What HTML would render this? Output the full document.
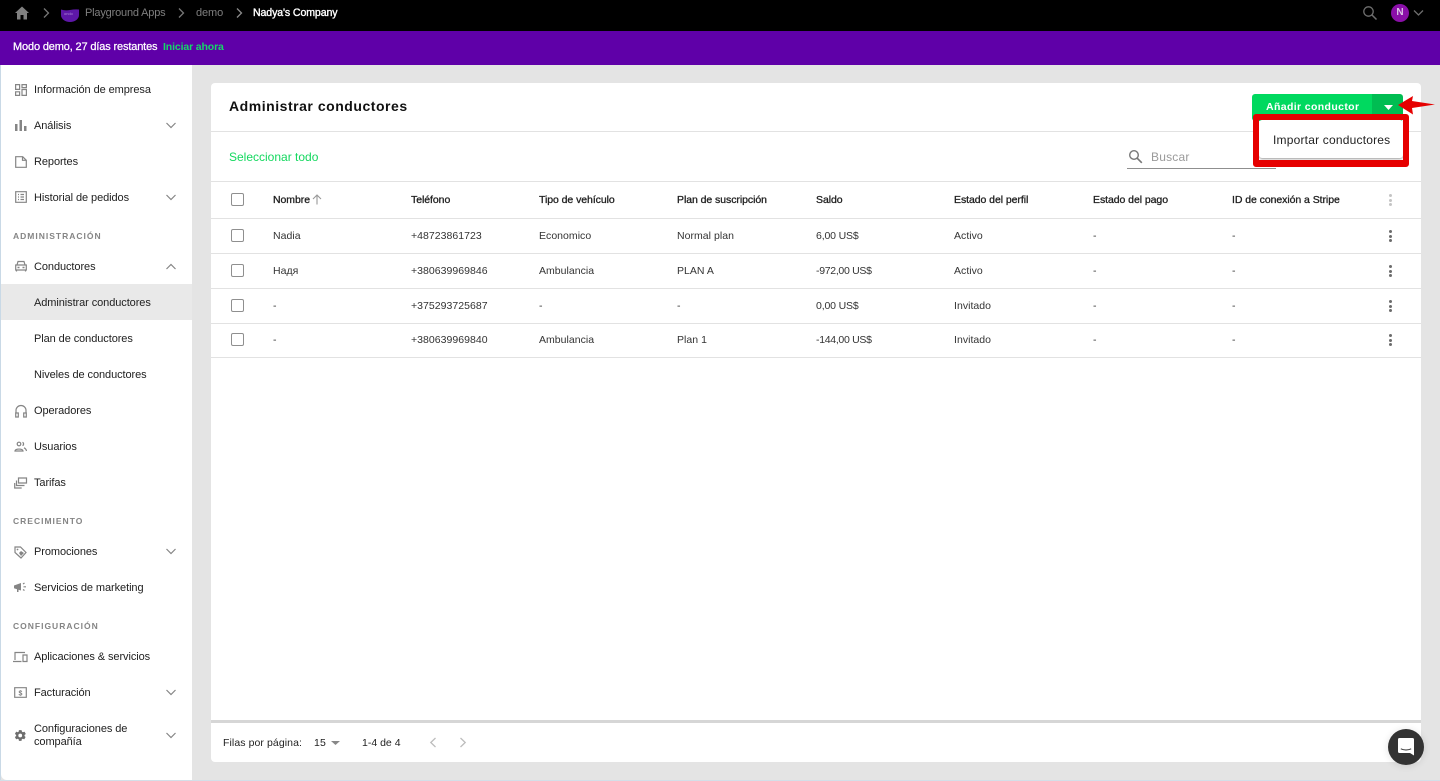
<!DOCTYPE html>
<html lang="es"><head><meta charset="utf-8"><title>Administrar conductores</title>
<style>
html,body{margin:0;padding:0;width:1440px;height:781px;overflow:hidden;background:#e4e4e4;font-family:"Liberation Sans","DejaVu Sans",sans-serif;color:#1c1c1c}
.a{position:absolute}
.t{position:absolute;font-size:11px;line-height:14px;white-space:nowrap}
svg{position:absolute;overflow:visible}
.ic{fill:none;stroke:#858585;stroke-width:1.2}
.f{fill:#858585;stroke:none}
.n{left:34px;color:#1e1e1e;letter-spacing:-.08px}
.h{font-size:10.5px;letter-spacing:-.06px;color:#1e1e1e;-webkit-text-stroke:.3px #1e1e1e}
.c{color:#333;font-size:10.5px;letter-spacing:.03px}
.sec{position:absolute;left:13px;font-size:8.5px;font-weight:700;letter-spacing:1px;color:#858585;line-height:12px}
.l{position:absolute;height:1px;background:#e2e2e2;left:211px;width:1210px}
.cb{position:absolute;left:231px;width:11px;height:11px;border:1.5px solid #8f8f8f;border-radius:2px}
.d i{position:absolute;left:0;width:3px;height:3px;border-radius:50%;background:#6c6c6c}
.d{position:absolute;left:1388.500px;width:3px;height:13px}
</style></head><body>
<div class="a" style="left:0;top:0;width:1440px;height:31px;background:#000"></div>
<div class="a" style="left:0;top:31px;width:1440px;height:34px;background:#5f00a8"></div>
<div class="a" style="left:0;top:65px;width:1px;height:716px;background:#c9d9e6"></div>
<div class="a" style="left:1px;top:65px;width:191px;height:715px;background:#fff;border-bottom-left-radius:6px"></div>
<div class="a" style="left:0;top:780px;width:1440px;height:1px;background:#d3dfe8"></div>

<svg style="left:14px;top:5px" width="16" height="16" viewBox="0 0 16 16"><path d="M1 8 8 1.500 15 8h-2v6.500H9.500V10h-3v4.500H3V8z" fill="#808080"/></svg>
<svg style="left:42px;top:7px" width="8" height="12" viewBox="0 0 8 12"><path d="M2 1.500 6.500 6 2 10.500" fill="none" stroke="#777" stroke-width="1.300"/></svg>
<svg style="left:61px;top:8px" width="18" height="14" viewBox="0 0 18 14"><path d="M0 1.500Q4 3 9 2T18 1.500V7A9 7 0 0 1 0 7z" fill="#5e17a8"/></svg>
<div class="t" style="left:64px;top:7px;font-size:4px;color:#a987d4">ondo</div>
<div class="t" style="left:85px;top:6px;color:#7f7f7f;letter-spacing:-.18px">Playground Apps</div>
<svg style="left:177px;top:7px" width="8" height="12" viewBox="0 0 8 12"><path d="M2 1.500 6.500 6 2 10.500" fill="none" stroke="#777" stroke-width="1.300"/></svg>
<div class="t" style="left:196px;top:6px;color:#7f7f7f;letter-spacing:-.1px">demo</div>
<svg style="left:235px;top:7px" width="8" height="12" viewBox="0 0 8 12"><path d="M2 1.500 6.500 6 2 10.500" fill="none" stroke="#8b8b8b" stroke-width="1.300"/></svg>
<div class="t" style="left:253px;top:6px;color:#fff;font-size:10.600px;letter-spacing:-.12px;-webkit-text-stroke:.35px #fff">Nadya's Company</div>
<svg style="left:1362px;top:5px" width="16" height="16" viewBox="0 0 16 16"><circle cx="6.500" cy="6.500" r="4.700" fill="none" stroke="#6e6e6e" stroke-width="1.300"/><path d="M10 10l4.500 4.500" stroke="#6e6e6e" stroke-width="1.500"/></svg>
<div class="a" style="left:1391px;top:4px;width:18px;height:18px;border-radius:50%;background:#8a0fa8;color:#dcc4e6;font-size:10px;font-weight:700;line-height:18px;text-align:center">N</div>
<svg style="left:1413px;top:9px" width="11" height="8" viewBox="0 0 11 8"><path d="M1 1.500 5.500 6 10 1.500" fill="none" stroke="#6e6e6e" stroke-width="1.300"/></svg>

<div class="t" style="left:13px;top:40px;color:#fff;font-size:11px;letter-spacing:-.15px;-webkit-text-stroke:.25px #fff">Modo demo, 27 días restantes</div>
<div class="t" style="left:163px;top:40px;color:#14d868;font-weight:700;font-size:10.500px;letter-spacing:-.13px">Iniciar ahora</div>

<!-- Sidebar -->
<div class="a" style="left:1px;top:284px;width:191px;height:36px;background:#e9e9e9"></div>
<div class="t n" style="top:83px">Información de empresa</div>
<div class="t n" style="top:119px">Análisis</div>
<div class="t n" style="top:155px">Reportes</div>
<div class="t n" style="top:191px">Historial de pedidos</div>
<div class="sec" style="top:230px">ADMINISTRACIÓN</div>
<div class="t n" style="top:260px">Conductores</div>
<div class="t n" style="top:296px">Administrar conductores</div>
<div class="t n" style="top:332px">Plan de conductores</div>
<div class="t n" style="top:368px">Niveles de conductores</div>
<div class="t n" style="top:404px">Operadores</div>
<div class="t n" style="top:440px">Usuarios</div>
<div class="t n" style="top:476px">Tarifas</div>
<div class="sec" style="top:515px">CRECIMIENTO</div>
<div class="t n" style="top:545px">Promociones</div>
<div class="t n" style="top:581px">Servicios de marketing</div>
<div class="sec" style="top:620px">CONFIGURACIÓN</div>
<div class="t n" style="top:650px">Aplicaciones &amp; servicios</div>
<div class="t n" style="top:686px">Facturación</div>
<div class="t n" style="top:723px;line-height:13px">Configuraciones de<br>compañía</div>

<!-- Sidebar chevrons -->
<svg style="left:166px;top:122px" width="10" height="7" viewBox="0 0 10 7"><path d="M.5 1 5 5.500 9.500 1" class="ic"/></svg>
<svg style="left:166px;top:194px" width="10" height="7" viewBox="0 0 10 7"><path d="M.5 1 5 5.500 9.500 1" class="ic"/></svg>
<svg style="left:166px;top:263px" width="10" height="7" viewBox="0 0 10 7"><path d="M.5 6 5 1.500 9.500 6" class="ic"/></svg>
<svg style="left:166px;top:548px" width="10" height="7" viewBox="0 0 10 7"><path d="M.5 1 5 5.500 9.500 1" class="ic"/></svg>
<svg style="left:166px;top:689px" width="10" height="7" viewBox="0 0 10 7"><path d="M.5 1 5 5.500 9.500 1" class="ic"/></svg>
<svg style="left:166px;top:732px" width="10" height="7" viewBox="0 0 10 7"><path d="M.5 1 5 5.500 9.500 1" class="ic"/></svg>

<!-- Sidebar icons -->
<svg style="left:15px;top:84px" width="12" height="12" viewBox="0 0 12 12"><path class="ic" d="M.6.600h4v4.800h-4zM7 .600h4.400v3H7zM7 5.500h4.400v5.900H7zM.6 7.800h4v3.600h-4z"/></svg>
<svg style="left:15px;top:120px" width="12" height="12" viewBox="0 0 12 12"><path class="f" d="M0 4h2.500v7H0zM4.500 0H7v11H4.500zM9 6h2.500v5H9z"/></svg>
<svg style="left:15px;top:156px" width="12" height="12" viewBox="0 0 12 12"><path class="ic" d="M.7.700h7l3.600 3.600v7H.7zM7.500.700v3.600h3.800"/></svg>
<svg style="left:15px;top:191px" width="12" height="12" viewBox="0 0 12 12"><path class="ic" d="M.7.700h10.600v10.600H.7zM3 3.500h1M5.500 3.500H9M3 6h1M5.500 6H9M3 8.500h1M5.500 8.500H9"/></svg>
<svg style="left:15px;top:260px" width="12" height="13" viewBox="0 0 12 13"><path class="ic" d="M3 1.500h6l1 3.500H2zM.7 5h10.600v5H.7zM1.500 10v1.500M10.500 10v1.500"/><path class="f" d="M2.500 6.800h2v1.500h-2zM7.500 6.800h2v1.500h-2z"/></svg>
<svg style="left:15px;top:405px" width="12" height="13" viewBox="0 0 12 13"><path class="ic" d="M1 8.500V5.500a5 5 0 0 1 10 0v3"/><path class="ic" d="M.7 8h2.600v4H.7zM8.700 8h2.600v4H8.700z"/></svg>
<svg style="left:14px;top:441px" width="13" height="11" viewBox="0 0 13 11"><circle cx="5" cy="3" r="1.800" class="ic"/><path class="ic" d="M1 10c.3-2.600 7.700-2.600 8 0zM8.500 1.300a1.800 1.800 0 0 1 0 3.300M10 6.800c1 .5 2.200 1.400 2.500 3.200"/></svg>
<svg style="left:14px;top:477px" width="13" height="12" viewBox="0 0 13 12"><path class="ic" d="M4.500 1h8v5h-8zM2.500 3.500v5h8M.7 6v5h7"/></svg>
<svg style="left:14px;top:546px" width="13" height="13" viewBox="0 0 13 13"><path class="ic" d="M1 1h5.500l5.500 5.500-5 5.500L1 6.500z"/><circle class="f" cx="3.500" cy="3.500" r=".9"/><path class="f" d="M7 5l3 2-3 3-2-3z"/></svg>
<svg style="left:14px;top:582px" width="13" height="11" viewBox="0 0 13 11"><path class="f" d="M0 3.500 7 1v7.500L4.500 7.800V10H3V7.300L0 6.300z"/><path class="ic" d="M9 2l1.500-1M9.500 4.800H12M9 7.500l1.500 1"/></svg>
<svg style="left:13px;top:651px" width="15" height="12" viewBox="0 0 15 12"><path class="ic" d="M2 9V1.500h10M0 10.500h8.500"/><path class="ic" d="M10 4h4v6.500h-4z"/></svg>
<svg style="left:14px;top:687px" width="13" height="11" viewBox="0 0 13 11"><path class="ic" d="M.7.700h11.600v9.600H.7z"/><text x="6.500" y="8.300" font-size="7" font-weight="700" text-anchor="middle" fill="#7a7a7a" font-family="Liberation Sans">$</text></svg>
<svg style="left:14px;top:729px" width="13" height="13" viewBox="0 0 24 24"><path fill="#6e6e6e" d="M19.400 13c0-.3.100-.6.100-1s0-.7-.1-1l2.100-1.600c.2-.2.200-.4.100-.6l-2-3.500c-.1-.2-.4-.3-.6-.2l-2.500 1c-.5-.4-1.100-.7-1.700-1L14 2.400c0-.2-.2-.4-.5-.4h-4c-.2 0-.4.200-.5.400L8.600 5c-.6.300-1.200.6-1.700 1l-2.500-1c-.2-.1-.5 0-.6.200l-2 3.500c-.1.200-.1.400.1.600L4 11c0 .3-.1.700-.1 1s0 .7.100 1l-2.100 1.600c-.2.200-.2.400-.1.600l2 3.500c.1.200.4.300.6.200l2.500-1c.5.400 1.100.7 1.700 1l.4 2.600c0 .2.200.4.500.4h4c.2 0 .4-.2.500-.4l.4-2.600c.6-.3 1.200-.6 1.700-1l2.500 1c.2.100.5 0 .6-.2l2-3.500c.1-.2.100-.4-.1-.6zM11.500 15.500a3.500 3.500 0 1 1 0-7 3.500 3.500 0 0 1 0 7z"/></svg>

<!-- Main card -->
<div class="a" style="left:211px;top:83px;width:1210px;height:679px;background:#fff;border-radius:4px"></div>
<div class="t" style="left:229px;top:97px;font-size:14px;line-height:18px;font-weight:700;color:#111;letter-spacing:.53px">Administrar conductores</div>
<div class="l" style="top:131px"></div>
<div class="t" style="left:229px;top:150px;color:#14d85f;font-size:12px">Seleccionar todo</div>
<svg style="left:1128px;top:149px" width="15" height="15" viewBox="0 0 15 15"><circle cx="6" cy="6" r="4.300" fill="none" stroke="#777" stroke-width="1.400"/><path d="M9.300 9.300l4.500 4.500" stroke="#777" stroke-width="1.600"/></svg>
<div class="t" style="left:1151px;top:150px;color:#9a9a9a;font-size:12px;letter-spacing:.2px">Buscar</div>
<div class="a" style="left:1127px;top:168px;width:149px;height:1px;background:#8f8f8f"></div>
<div class="l" style="top:181px"></div>
<div class="l" style="top:218px"></div>
<div class="l" style="top:253px"></div>
<div class="l" style="top:288px"></div>
<div class="l" style="top:323px"></div>
<div class="l" style="top:357px"></div>

<!-- Header -->
<div class="cb" style="top:193px"></div>
<div class="t h" style="left:273px;top:193px">Nombre</div>
<svg style="left:312px;top:194px" width="10" height="11" viewBox="0 0 10 11"><path d="M5 10.500V1.500M1 5l4-4 4 4" fill="none" stroke="#999" stroke-width="1.100"/></svg>
<div class="t h" style="left:411px;top:193px">Teléfono</div>
<div class="t h" style="left:539px;top:193px">Tipo de vehículo</div>
<div class="t h" style="left:677px;top:193px">Plan de suscripción</div>
<div class="t h" style="left:816px;top:193px">Saldo</div>
<div class="t h" style="left:954px;top:193px">Estado del perfil</div>
<div class="t h" style="left:1093px;top:193px">Estado del pago</div>
<div class="t h" style="left:1232px;top:193px">ID de conexión a Stripe</div>
<div class="d" style="top:194px"><i style="top:0;background:#c4c4c4"></i><i style="top:4.500px;background:#c4c4c4"></i><i style="top:9px;background:#c4c4c4"></i></div>

<!-- Row 1 -->
<div class="cb" style="top:229px"></div>
<div class="t c" style="left:273px;top:229px">Nadia</div>
<div class="t c" style="left:411px;top:229px">+48723861723</div>
<div class="t c" style="left:539px;top:229px">Economico</div>
<div class="t c" style="left:677px;top:229px">Normal plan</div>
<div class="t c" style="left:816px;top:229px;letter-spacing:-.15px">6,00 US$</div>
<div class="t c" style="left:954px;top:229px">Activo</div>
<div class="t c" style="left:1093px;top:229px">-</div>
<div class="t c" style="left:1232px;top:229px">-</div>
<div class="d" style="top:230px"><i style="top:0"></i><i style="top:4.500px"></i><i style="top:9px"></i></div>

<!-- Row 2 -->
<div class="cb" style="top:264px"></div>
<div class="t c" style="left:273px;top:264px">Надя</div>
<div class="t c" style="left:411px;top:264px">+380639969846</div>
<div class="t c" style="left:539px;top:264px">Ambulancia</div>
<div class="t c" style="left:677px;top:264px">PLAN A</div>
<div class="t c" style="left:816px;top:264px;letter-spacing:-.3px">-972,00 US$</div>
<div class="t c" style="left:954px;top:264px">Activo</div>
<div class="t c" style="left:1093px;top:264px">-</div>
<div class="t c" style="left:1232px;top:264px">-</div>
<div class="d" style="top:265px"><i style="top:0"></i><i style="top:4.500px"></i><i style="top:9px"></i></div>

<!-- Row 3 -->
<div class="cb" style="top:299px"></div>
<div class="t c" style="left:273px;top:299px">-</div>
<div class="t c" style="left:411px;top:299px">+375293725687</div>
<div class="t c" style="left:539px;top:299px">-</div>
<div class="t c" style="left:677px;top:299px">-</div>
<div class="t c" style="left:816px;top:299px;letter-spacing:-.15px">0,00 US$</div>
<div class="t c" style="left:954px;top:299px">Invitado</div>
<div class="t c" style="left:1093px;top:299px">-</div>
<div class="t c" style="left:1232px;top:299px">-</div>
<div class="d" style="top:300px"><i style="top:0"></i><i style="top:4.500px"></i><i style="top:9px"></i></div>

<!-- Row 4 -->
<div class="cb" style="top:333px"></div>
<div class="t c" style="left:273px;top:333px">-</div>
<div class="t c" style="left:411px;top:333px">+380639969840</div>
<div class="t c" style="left:539px;top:333px">Ambulancia</div>
<div class="t c" style="left:677px;top:333px">Plan 1</div>
<div class="t c" style="left:816px;top:333px;letter-spacing:-.3px">-144,00 US$</div>
<div class="t c" style="left:954px;top:333px">Invitado</div>
<div class="t c" style="left:1093px;top:333px">-</div>
<div class="t c" style="left:1232px;top:333px">-</div>
<div class="d" style="top:334px"><i style="top:0"></i><i style="top:4.500px"></i><i style="top:9px"></i></div>

<!-- Footer -->
<div class="a" style="left:211px;top:720px;width:1210px;height:3px;background:#d6d6d6"></div>
<div class="t" style="left:223px;top:736px;font-size:10.500px;letter-spacing:.08px;color:#222">Filas por página:</div>
<div class="t" style="left:314px;top:736px;font-size:10.500px;letter-spacing:.2px;color:#222">15</div>
<svg style="left:331px;top:741px" width="9" height="4" viewBox="0 0 9 4"><path d="M0 0h9L4.500 4z" fill="#888"/></svg>
<div class="t" style="left:362px;top:736px;font-size:10.500px;color:#222">1-4 de 4</div>
<svg style="left:429px;top:737px" width="8" height="11" viewBox="0 0 8 11"><path d="M6.500 1 1.800 5.500 6.500 10" fill="none" stroke="#bdbdbd" stroke-width="1.300"/></svg>
<svg style="left:459px;top:737px" width="8" height="11" viewBox="0 0 8 11"><path d="M1.500 1 6.200 5.500 1.500 10" fill="none" stroke="#bdbdbd" stroke-width="1.300"/></svg>

<!-- Button -->
<div class="a" style="left:1252px;top:94px;width:120px;height:27px;background:#00d95f;border-radius:3px 0 0 3px"></div>
<div class="a" style="left:1372px;top:94px;width:31px;height:27px;background:#00bd52;border-radius:0 3px 3px 0"></div>
<div class="t" style="left:1266px;top:100px;color:#fff;font-weight:700;font-size:10.500px;letter-spacing:.37px">Añadir conductor</div>
<svg style="left:1384px;top:105px" width="9" height="5" viewBox="0 0 9 5"><path d="M0 0h9L4.500 5z" fill="#fff"/></svg>

<!-- Dropdown with annotation -->
<div class="a" style="left:1259px;top:120px;width:144px;height:38px;background:#fff;border-radius:3px;box-shadow:0 1px 2px rgba(0,0,0,.4)"></div>
<div class="t" style="left:1273px;top:133px;font-size:12px;letter-spacing:.2px;color:#222">Importar conductores</div>
<div class="a" style="left:1253px;top:114px;width:156px;height:53px;box-sizing:border-box;border:6px solid #e60000;border-bottom-width:7px;border-radius:3px"></div>
<svg style="left:1397px;top:95px" width="39" height="21" viewBox="0 0 39 21"><path d="M1 10 16 1l-1 5 23 3.500L15 13l1 6.500z" fill="#e60000"/></svg>

<!-- Chat -->
<div class="a" style="left:1388px;top:729px;width:36px;height:36px;border-radius:50%;background:#333;box-shadow:0 1px 8px rgba(0,0,0,.12)"></div>
<svg style="left:1398px;top:738px" width="16" height="18" viewBox="0 0 16 18"><path d="M1.500 0h13A1.500 1.500 0 0 1 16 1.500V17.500L12 15H1.500A1.500 1.500 0 0 1 0 13.500V1.500A1.500 1.500 0 0 1 1.500 0z" fill="#fff"/><path d="M2.800 10.800q5.200 2.400 10.400 0" fill="none" stroke="#333" stroke-width="1"/></svg>
</body></html>
